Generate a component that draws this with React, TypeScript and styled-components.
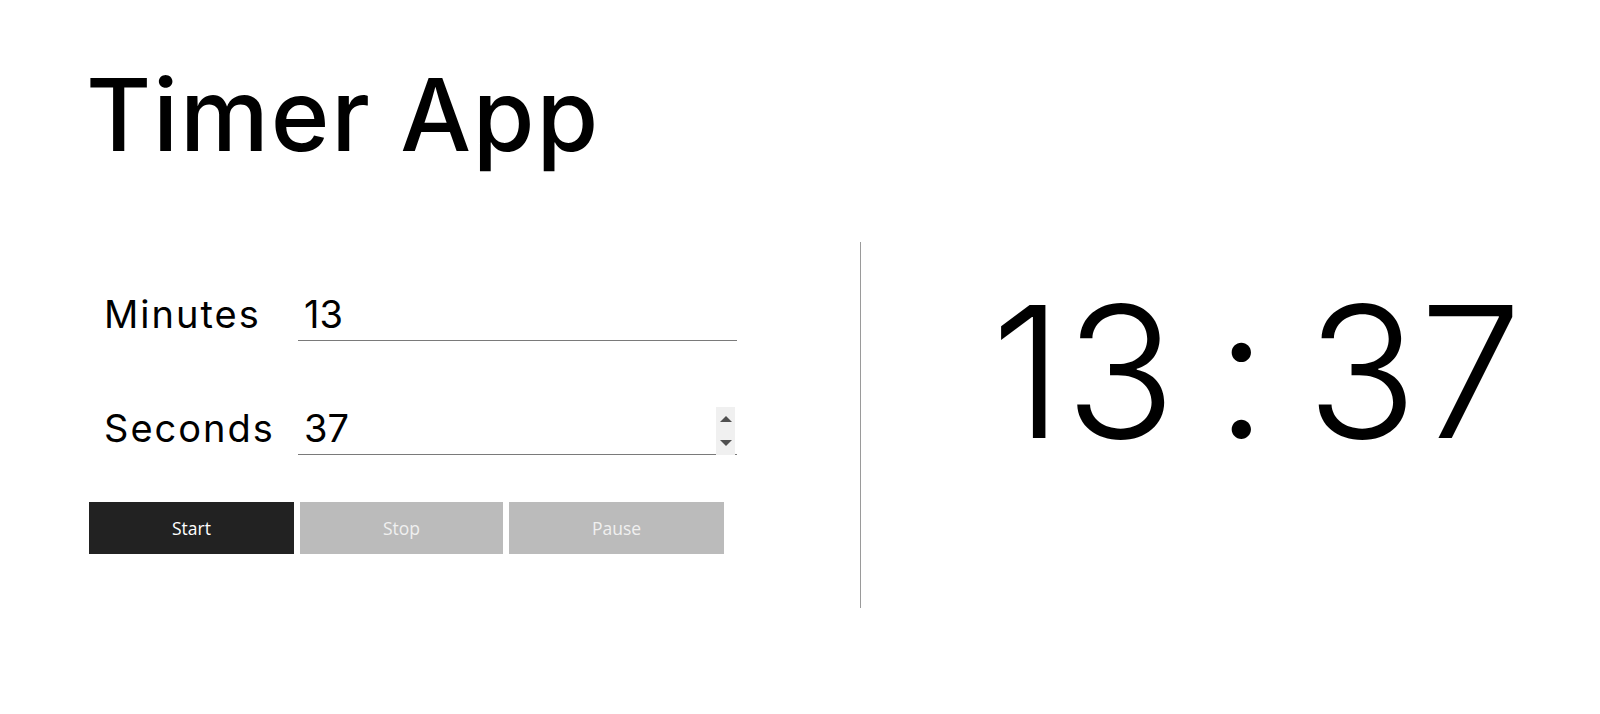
import React from "react";
import styled, { createGlobalStyle } from "styled-components";

const GlobalStyle = createGlobalStyle`
  html, body { margin: 0; padding: 0; background: #fff; }
  body { font-family: Inter, "DejaVu Sans", sans-serif; color: #000; }
  * { box-sizing: border-box; }
`;

const Page = styled.div`
  padding-left: 88px;
`;

const Title = styled.h1`
  margin: 65px 0 0 -2px;
  font-size: 100px;
  line-height: 100px;
  font-weight: 500;
  letter-spacing: 1.8px;
`;

const Main = styled.div`
  display: flex;
  margin-top: 77px;
  align-items: stretch;
`;

const Controls = styled.div`
  width: 772px;
  padding-top: 48px;
  display: flex;
  flex-direction: column;
`;

const Field = styled.div<{ $gap?: number }>`
  display: flex;
  align-items: baseline;
  padding-left: 16px;
  margin-top: ${(p) => p.$gap ?? 0}px;
`;

const Label = styled.label`
  width: 194px;
  font-size: 38px;
  font-weight: 400;
  letter-spacing: 2px;
`;

const InputWrap = styled.div`
  position: relative;
  width: 439px;
`;

const Input = styled.input`
  display: block;
  width: 100%;
  border: none;
  border-bottom: 1px solid #7a7a7a;
  outline: none;
  background: transparent;
  font-family: Inter, "DejaVu Sans", sans-serif;
  font-size: 38px;
  font-weight: 400;
  line-height: 48px;
  height: 51px;
  padding: 0 8px 2px 6px;
  color: #000;
`;

const Spinner = styled.div`
  position: absolute;
  right: 2px;
  top: 3px;
  width: 19px;
  height: 48px;
  background: #f0f0f0;
  display: flex;
  flex-direction: column;
  align-items: center;
  justify-content: space-around;
`;

const Arrow = styled.span<{ $down?: boolean }>`
  width: 0;
  height: 0;
  border-left: 6px solid transparent;
  border-right: 6px solid transparent;
  ${(p) =>
    p.$down
      ? "border-top: 6px solid #505050;"
      : "border-bottom: 6px solid #505050;"}
`;

const Buttons = styled.div`
  display: flex;
  gap: 6px;
  margin-top: 47px;
  margin-left: 1px;
`;

const Button = styled.button<{ $active?: boolean }>`
  height: 52px;
  padding: 0 83px;
  border: none;
  background: ${(p) => (p.$active ? "#222222" : "#bbbbbb")};
  color: ${(p) => (p.$active ? "#ffffff" : "#f0f0f0")};
  font-family: "Open Sans", sans-serif;
  font-size: 17.5px;
  cursor: pointer;
`;

const Display = styled.div`
  border-left: 1px solid #9a9a9a;
  height: 366px;
  padding-top: 38px;
  padding-left: 130px;
  font-size: 183px;
  line-height: 1;
  font-weight: 300;
  white-space: pre;
  word-spacing: -16px;
  letter-spacing: 2px;
`;

export default function App() {
  return (
    <>
      <GlobalStyle />
      <Page>
        <Title>Timer App</Title>
        <Main>
          <Controls>
            <Field>
              <Label>Minutes</Label>
              <InputWrap>
                <Input type="text" defaultValue="13" />
              </InputWrap>
            </Field>
            <Field $gap={63}>
              <Label>Seconds</Label>
              <InputWrap>
                <Input type="text" defaultValue="37" />
                <Spinner>
                  <Arrow />
                  <Arrow $down />
                </Spinner>
              </InputWrap>
            </Field>
            <Buttons>
              <Button $active>Start</Button>
              <Button>Stop</Button>
              <Button>Pause</Button>
            </Buttons>
          </Controls>
          <Display>13 : 37</Display>
        </Main>
      </Page>
    </>
  );
}
